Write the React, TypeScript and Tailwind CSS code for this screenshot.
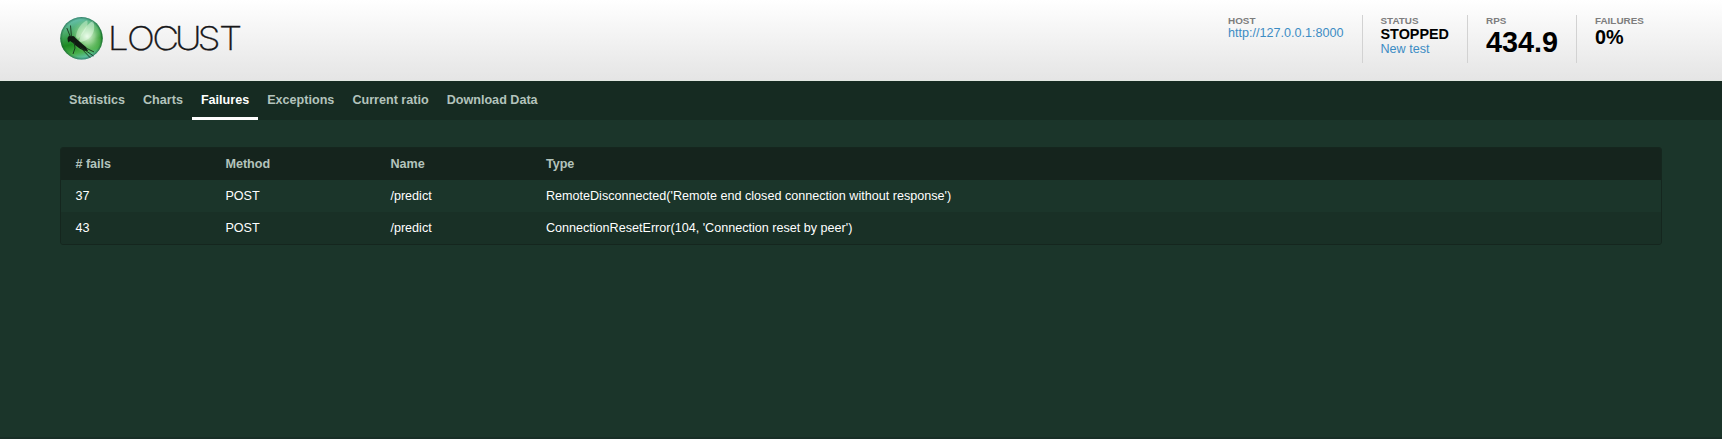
import React from "react";

const tabs = ["Statistics", "Charts", "Failures", "Exceptions", "Current ratio", "Download Data"];

const failures = [
  { count: 37, method: "POST", name: "/predict", type: "RemoteDisconnected('Remote end closed connection without response')" },
  { count: 43, method: "POST", name: "/predict", type: "ConnectionResetError(104, 'Connection reset by peer')" },
];

function Logo() {
  return (
    <svg width="184" height="46" viewBox="0 0 184 46" role="img" aria-label="Locust">
      <defs>
        <linearGradient id="ball" x1="0.3" y1="0" x2="0.55" y2="1">
          <stop offset="0" stopColor="#6cc4bd" />
          <stop offset="0.3" stopColor="#4cac6c" />
          <stop offset="0.6" stopColor="#1c8a20" />
          <stop offset="0.82" stopColor="#48ae4b" />
          <stop offset="1" stopColor="#62c6bd" />
        </linearGradient>
        <radialGradient id="shine" cx="0.64" cy="0.45" r="0.42">
          <stop offset="0" stopColor="#f2fff0" stopOpacity="0.95" />
          <stop offset="0.45" stopColor="#c5f0bd" stopOpacity="0.65" />
          <stop offset="1" stopColor="#8bd780" stopOpacity="0" />
        </radialGradient>
        <radialGradient id="rim" cx="0.5" cy="0.5" r="0.5">
          <stop offset="0.88" stopColor="#17643b" stopOpacity="0" />
          <stop offset="1" stopColor="#145538" stopOpacity="0.6" />
        </radialGradient>
      </defs>
      <circle cx="21.5" cy="23.3" r="21.2" fill="url(#ball)" />
      <circle cx="21.5" cy="23.3" r="20" fill="url(#shine)" />
      <path d="M16 22C16 15 22 7 27 5.5C29 8 26 17 18 24Z" fill="#d9f6d5" fillOpacity="0.45" />
      <path d="M19 26C21 17 28 8 33 6C36 13 34 24 21 27Z" fill="#edfff0" fillOpacity="0.45" />
      <circle cx="21.5" cy="23.3" r="21.2" fill="url(#rim)" />
      <path d="M7.5 23L9 20.8L14 21.2L16 23.5L20 27L26 32L28 36L24.5 35.7L20 33.8L15 30L13 28L10 26L8.7 27.5L7.8 26Z" fill="#101b12" />
      <path d="M10.5 22L6.8 13M11.5 22L10.5 10.5M14 27L15 33L13 39M22 33L33.5 41M20 32L30 42.5M26 33L34 37" fill="none" stroke="#17331d" strokeWidth="0.9" />
      <text
        transform="scale(1.14 1)"
        x="42 58.8 81 100.6 120.6 139.5"
        y="34.8"
        fontSize="32.5"
        fontWeight="200"
        fill="#18181a"
        stroke="#18181a"
        strokeWidth="0.25"
        className="font-['Inter',sans-serif]"
      >
        LOCUST
      </text>
    </svg>
  );
}

function Stat({ label, className = "", children }: { label: string; className?: string; children: React.ReactNode }) {
  return (
    <div className={`h-12 ${className}`}>
      <div className="h-[10px] text-[9.9px] leading-[11px] font-bold text-[#7d7d7d]">{label}</div>
      {children}
    </div>
  );
}

export default function App() {
  return (
    <div className="flex h-[439px] flex-col border-b-2 border-[#182e26] bg-[#1b352a] font-['Liberation_Sans',Arial,sans-serif] text-[12.6px] leading-[15px] text-white">
      <header className="flex h-[81px] justify-between border-b border-[#e2e8e2] bg-linear-to-b from-white to-[#e5e5e5] px-[60px] pt-[15px]">
        <Logo />
        <div className="flex text-black">
          <Stat label="HOST" className="w-[152px] pl-[18px]">
            <a href="#" className="block pt-px text-[#3c8cc4]">http://127.0.0.1:8000</a>
          </Stat>
          <Stat label="STATUS" className="w-[105px] border-l border-[#d2d2d2] pl-[17.5px]">
            <div className="pt-px text-[14.4px] leading-4 font-bold">STOPPED</div>
            <a href="#" className="block text-[#3c8cc4]">New test</a>
          </Stat>
          <Stat label="RPS" className="w-[109px] border-l border-[#d2d2d2] pl-[18px]">
            <div className="pt-px text-[28.8px] leading-8 font-bold">434.9</div>
          </Stat>
          <Stat label="FAILURES" className="w-[86px] border-l border-[#d2d2d2] pl-[18px]">
            <div className="pt-px text-[19.8px] leading-[22px] font-bold">0%</div>
          </Stat>
        </div>
      </header>
      <nav className="flex h-[39px] bg-[#162b22] px-[60px] font-bold">
        {tabs.map((tab) => (
          <a
            key={tab}
            href="#"
            className={`border-b-3 px-[9px] pt-3 ${tab === "Failures" ? "border-white text-white" : "border-transparent text-[#b3c3bc]"}`}
          >
            {tab}
          </a>
        ))}
      </nav>
      <main className="px-[60px] pt-[27px]">
        <table className="w-full table-fixed border-separate border-spacing-0 overflow-hidden rounded-[3px] border border-[#15261e]">
          <colgroup>
            <col className="w-[150px]" />
            <col className="w-[165px]" />
            <col className="w-[155.5px]" />
            <col />
          </colgroup>
          <thead className="bg-[#15241d] text-left text-[#b3c3bc]">
            <tr className="h-8">
              <th className="pl-[14.4px]">#&nbsp;fails</th>
              <th className="pl-[14.4px]">Method</th>
              <th className="pl-[14.4px]">Name</th>
              <th className="pl-[14.4px]">Type</th>
            </tr>
          </thead>
          <tbody>
            {failures.map((row) => (
              <tr key={row.count} className="h-8 even:bg-[#193026]">
                <td className="pl-[14.4px]">{row.count}</td>
                <td className="pl-[14.4px]">{row.method}</td>
                <td className="pl-[14.4px]">{row.name}</td>
                <td className="pl-[14.4px]">{row.type}</td>
              </tr>
            ))}
          </tbody>
        </table>
      </main>
    </div>
  );
}
